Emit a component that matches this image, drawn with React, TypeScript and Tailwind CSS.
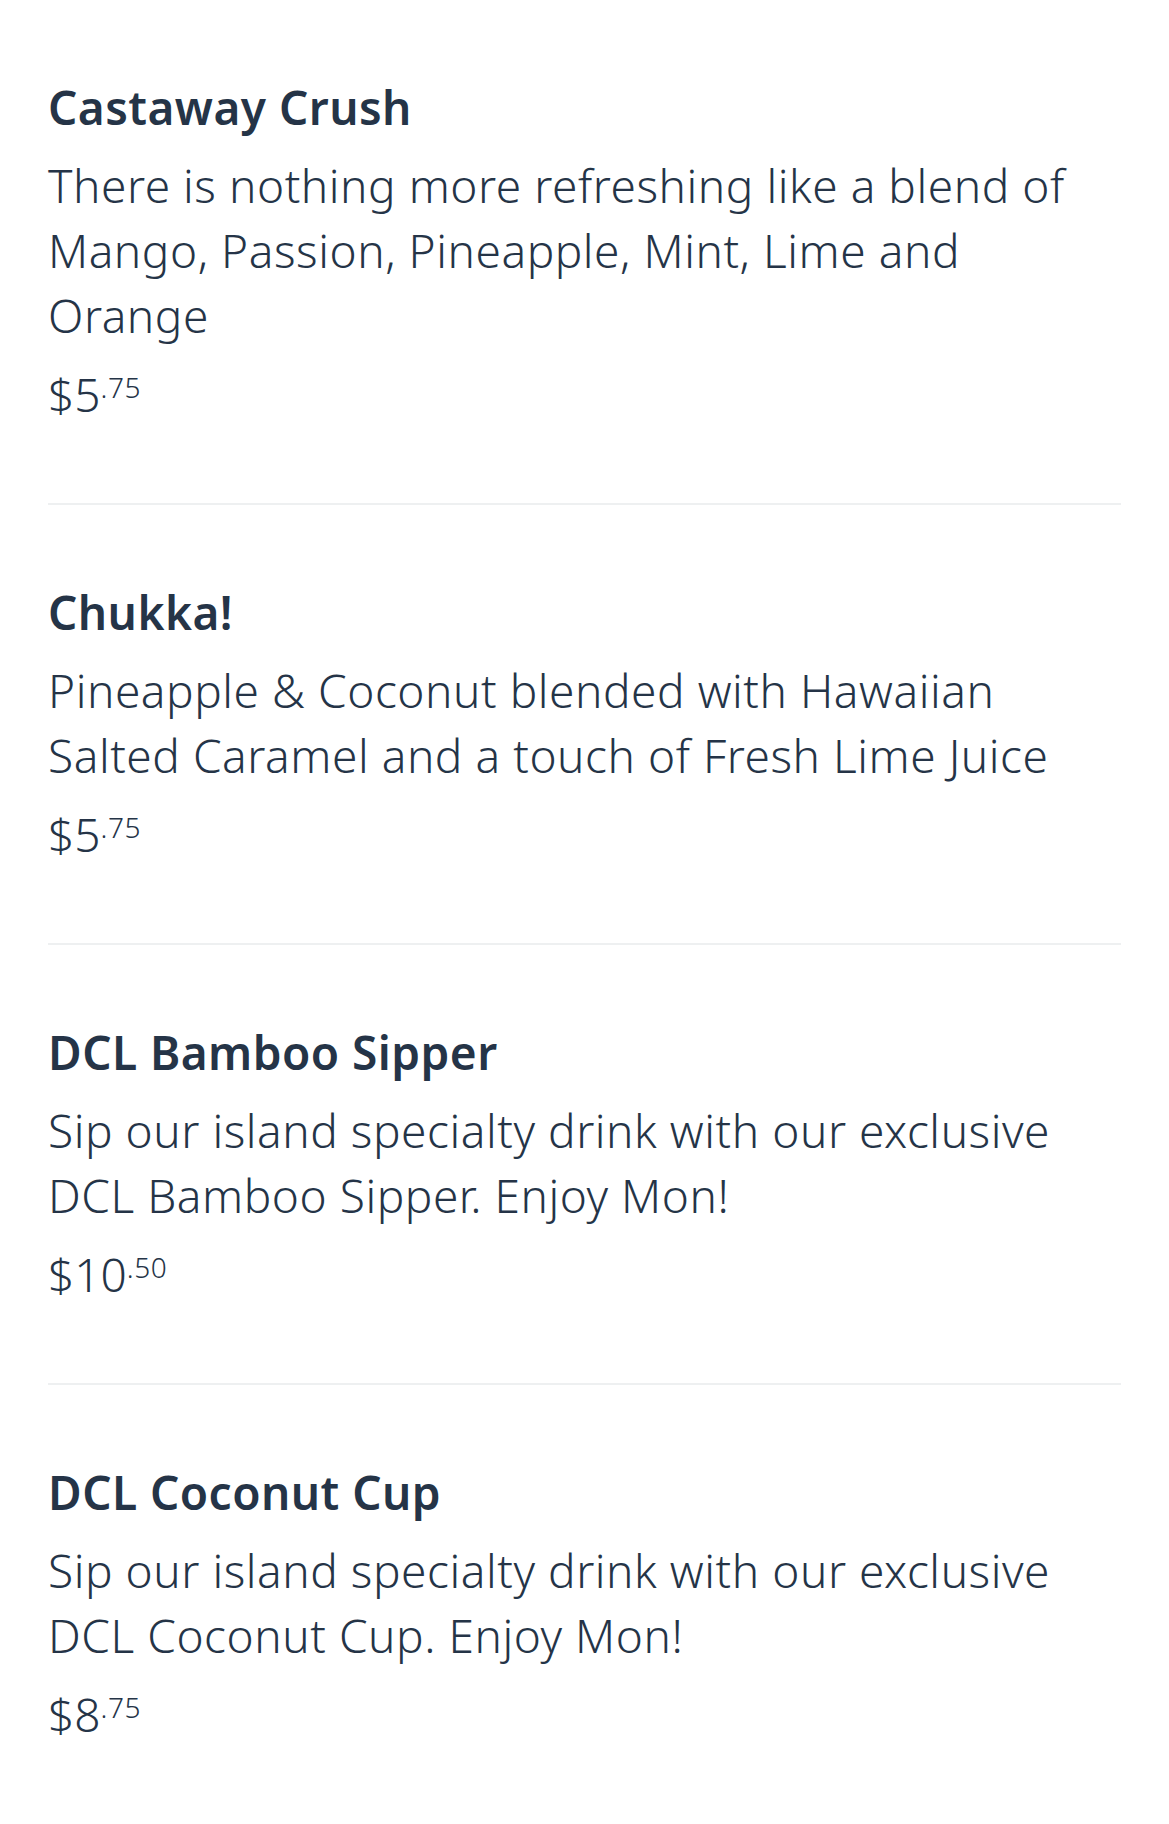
type Item = {
  name: string
  lines: string[]
  dollars: string
  cents: string
}

const items: Item[] = [
  {
    name: 'Castaway Crush',
    lines: ['There is nothing more refreshing like a blend of', 'Mango, Passion, Pineapple, Mint, Lime and', 'Orange'],
    dollars: '5',
    cents: '75',
  },
  {
    name: 'Chukka!',
    lines: ['Pineapple & Coconut blended with Hawaiian', 'Salted Caramel and a touch of Fresh Lime Juice'],
    dollars: '5',
    cents: '75',
  },
  {
    name: 'DCL Bamboo Sipper',
    lines: ['Sip our island specialty drink with our exclusive', 'DCL Bamboo Sipper. Enjoy Mon!'],
    dollars: '10',
    cents: '50',
  },
  {
    name: 'DCL Coconut Cup',
    lines: ['Sip our island specialty drink with our exclusive', 'DCL Coconut Cup. Enjoy Mon!'],
    dollars: '8',
    cents: '75',
  },
]

export default function App() {
  return (
    <div className="min-h-[1824px] w-full bg-white px-[48px] font-['Noto_Sans',sans-serif] text-[#253447]">
      {items.map((item, i) => (
        <div
          key={item.name}
          className={`pt-[74px] pb-[76px] ${i < items.length - 1 ? 'border-b-2 border-[#eef0f1]' : ''}`}
        >
          <h2 className="text-[46px] font-semibold leading-[66px] tracking-[0.01em]">{item.name}</h2>
          <p className="mt-[13px] text-[46px] font-light leading-[65px] tracking-[0.012em]">
            {item.lines.map((line, j) => (
              <span key={j} className="block">
                {line}
              </span>
            ))}
          </p>
          <div className="mt-[13px] flex items-start leading-[66px] font-light">
            <span className="text-[46px]">${item.dollars}</span>
            <span className="mt-[-7px] text-[28px] tracking-[0.02em]">.{item.cents}</span>
          </div>
        </div>
      ))}
    </div>
  )
}
